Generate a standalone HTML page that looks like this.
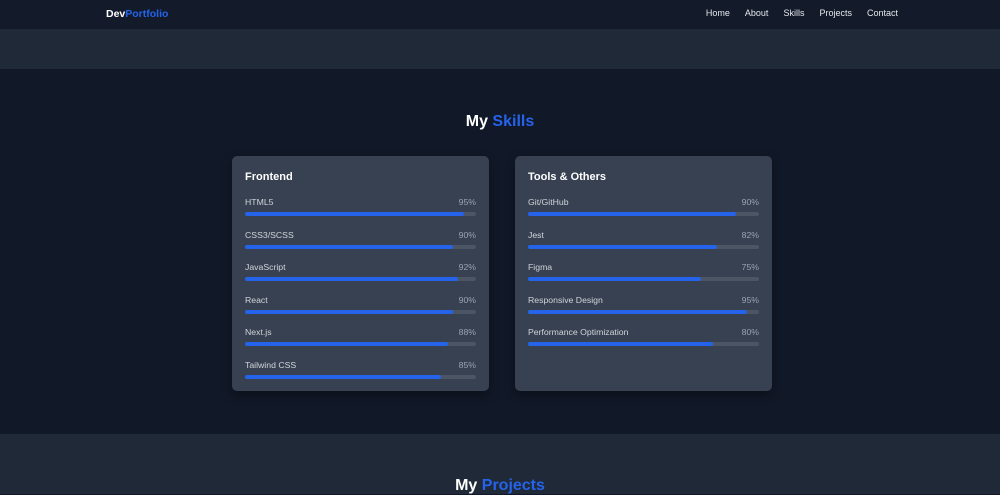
<!DOCTYPE html><html><head><style>
*{margin:0;padding:0;box-sizing:border-box}
body{width:1000px;height:494px;overflow:hidden;background:#111827;font-family:"Liberation Sans",sans-serif;color:#e5e7eb}
.nav{position:absolute;top:0;left:0;width:1000px;height:29px;background:#131b2b;box-shadow:0 2px 6px rgba(0,0,0,.4)}
.logo{position:absolute;left:106px;top:8px;font-weight:bold;font-size:10.5px;color:#fff}
.logo span{color:#2563eb}
.links{position:absolute;right:102px;top:8px;font-size:9px;color:#e5e7eb}
.links a{margin-left:15px}
.band{position:absolute;top:29px;left:0;width:1000px;height:40px;background:#1f2937}
h2{position:absolute;width:1000px;text-align:center;font-size:16px;font-weight:bold;color:#fff}
h2 span{color:#2563eb}
.card{position:absolute;top:156px;width:257px;height:235px;background:#374151;border-radius:5px;padding:0 13px;box-shadow:0 4px 10px rgba(0,0,0,.35)}
.card h3{font-size:11px;color:#fff;margin-top:15px;height:26px}
.row{height:32.6px;font-size:8.7px;color:#d1d5db;position:relative}
.row b{font-weight:normal;position:absolute;right:0;top:0;color:#9ca3af}
.bar{position:absolute;top:15px;left:0;right:0;height:4px;background:#4b5563;border-radius:2px}
.bar i{display:block;height:4px;background:#2563eb;border-radius:2px}
.proj{position:absolute;top:434px;left:0;width:1000px;height:60px;background:#1f2937}
</style></head><body>
<div class="nav"><div class="logo">Dev<span>Portfolio</span></div><div class="links"><a>Home</a><a>About</a><a>Skills</a><a>Projects</a><a>Contact</a></div></div>
<div class="band"></div>
<h2 style="top:113px">My <span>Skills</span></h2>
<div class="card" style="left:232px"><h3>Frontend</h3>
<div class="row">HTML5<b>95%</b><div class="bar"><i style="width:95%"></i></div></div>
<div class="row">CSS3/SCSS<b>90%</b><div class="bar"><i style="width:90%"></i></div></div>
<div class="row">JavaScript<b>92%</b><div class="bar"><i style="width:92%"></i></div></div>
<div class="row">React<b>90%</b><div class="bar"><i style="width:90%"></i></div></div>
<div class="row">Next.js<b>88%</b><div class="bar"><i style="width:88%"></i></div></div>
<div class="row">Tailwind CSS<b>85%</b><div class="bar"><i style="width:85%"></i></div></div>
</div>
<div class="card" style="left:515px"><h3>Tools &amp; Others</h3>
<div class="row">Git/GitHub<b>90%</b><div class="bar"><i style="width:90%"></i></div></div>
<div class="row">Jest<b>82%</b><div class="bar"><i style="width:82%"></i></div></div>
<div class="row">Figma<b>75%</b><div class="bar"><i style="width:75%"></i></div></div>
<div class="row">Responsive Design<b>95%</b><div class="bar"><i style="width:95%"></i></div></div>
<div class="row">Performance Optimization<b>80%</b><div class="bar"><i style="width:80%"></i></div></div>
</div>
<div class="proj"></div>
<h2 style="top:477px">My <span>Projects</span></h2>
</body></html>
